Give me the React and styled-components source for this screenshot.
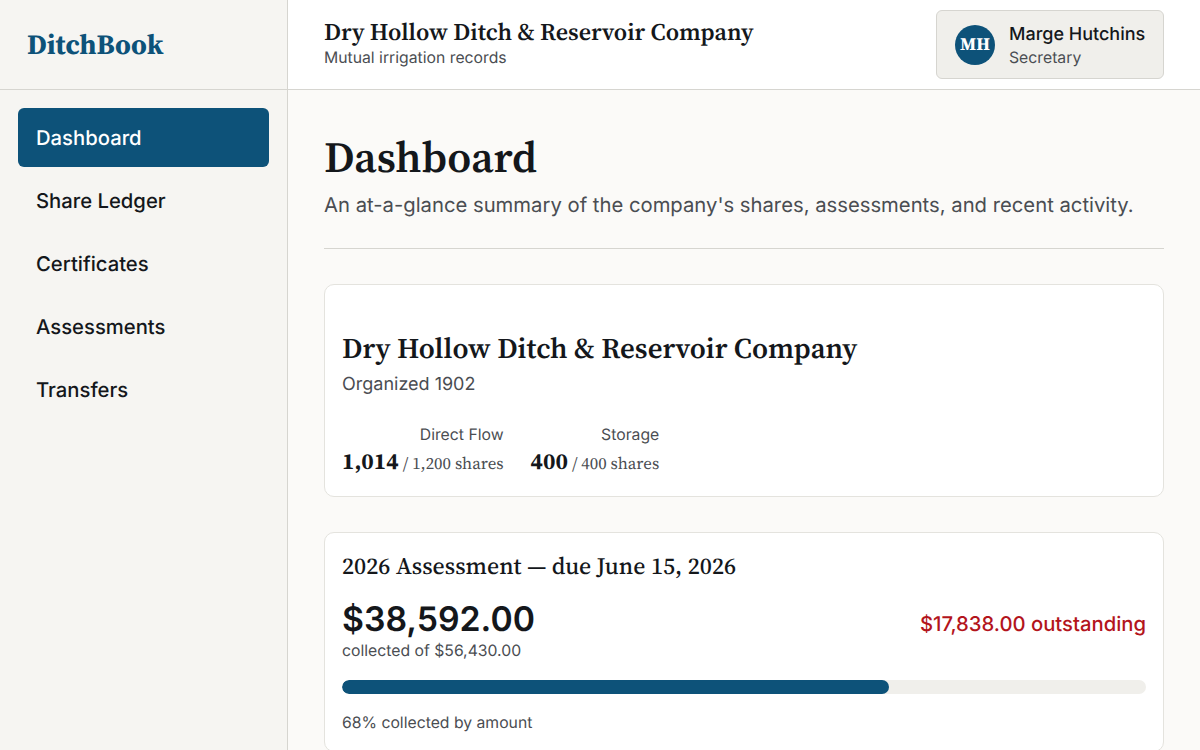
import React from 'react';
import styled, { createGlobalStyle } from 'styled-components';

const Global = createGlobalStyle`
  html, body { margin: 0; padding: 0; height: 100%; overflow: hidden; }
  * { box-sizing: border-box; font-optical-sizing: none; text-rendering: geometricPrecision; }
  body { font-family: Inter, sans-serif; background: #fbfaf8; color: #14171b; }
`;
const SERIF = `"Source Serif 4", "Liberation Serif", serif`;
const Shell = styled.div`display: grid; grid-template-columns: 288px 1fr; grid-template-rows: 90px 1fr; height: 750px; overflow: hidden;`;
const Brand = styled.div`background: #f6f5f2; border-right: 1px solid #d6d5d0; border-bottom: 1px solid #d6d5d0; display: flex; align-items: center; padding-left: 27px; font-family: ${SERIF}; font-weight: 700; font-size: 28px; color: #0d5279;`;
const Top = styled.header`background: #fff; border-bottom: 1px solid #d6d5d0; display: flex; align-items: center; justify-content: space-between; padding: 0 36px;`;
const TopText = styled.div`padding-bottom: 4px;`;
const Org = styled.div`font-family: ${SERIF}; font-weight: 600; font-size: 24px; line-height: 30px;`;
const Sub = styled.div`font-size: 15.75px; line-height: 20px; color: #4a4d52;`;
const User = styled.div`width: 228px; height: 69px; background: #f0efeb; border: 1px solid #d6d5d0; border-radius: 6px; display: flex; align-items: center; gap: 14px; padding-left: 18px;`;
const Avatar = styled.div`width: 40px; height: 40px; border-radius: 50%; background: #0d5279; color: #fff; font-family: ${SERIF}; font-weight: 700; font-size: 18px; display: flex; align-items: center; justify-content: center;`;
const UserText = styled.div`padding-top: 3px;`;
const UName = styled.div`font-size: 18px; line-height: 22px; font-weight: 500;`;
const URole = styled.div`font-size: 15.75px; line-height: 20px; color: #4a4d52; margin-top: 2px;`;
const Side = styled.nav`background: #f6f5f2; border-right: 1px solid #d6d5d0; padding: 18px; display: flex; flex-direction: column; gap: 4px;`;
const NavItem = styled.div`height: 59px; border-radius: 6px; padding-left: 18px; display: flex; align-items: center; font-size: 20.25px; font-weight: 500; color: ${p => p.$active ? '#fff' : '#14171b'}; background: ${p => p.$active ? '#0d5279' : 'transparent'};`;
const Main = styled.main`padding: 36px; overflow: hidden;`;
const H1 = styled.h1`margin: 0; font-family: ${SERIF}; font-weight: 600; font-size: 43.2px; line-height: 64px;`;
const Lead = styled.p`margin: 2px 0 0; font-size: 20.25px; color: #4a4d52;`;
const Rule = styled.hr`border: 0; border-top: 1px solid #d6d5d0; margin: 31px 0 35px;`;
const Card = styled.section`background: #fff; border: 1px solid #e4e3de; border-radius: 10px; padding: ${p => p.$top}px 17px 19px; margin-bottom: 35px;`;
const CardTitle = styled.h2`margin: 25px 0 0; font-family: ${SERIF}; font-weight: 600; font-size: 28.8px;`;
const Muted = styled.div`font-size: 18px; color: #4a4d52; margin-top: 6px;`;
const Stats = styled.div`display: flex; gap: 27px; margin-top: 30px;`;
const Stat = styled.div`text-align: right;`;
const StatLabel = styled.div`font-size: 15.75px; color: #4a4d52;`;
const StatValue = styled.div`font-family: ${SERIF}; margin-top: 1px; font-size: 16.875px; color: #4a4d52; b { font-size: 23px; color: #14171b; }`;
const AssessTitle = styled.h3`margin: 0; font-family: ${SERIF}; font-weight: 500; font-size: 23.75px;`;
const Row = styled.div`display: flex; justify-content: space-between; align-items: baseline; margin-top: 17px;`;
const Amount = styled.div`font-size: 33.75px; font-weight: 600;`;
const Out = styled.div`font-size: 20.25px; font-weight: 500; color: #b3141c;`;
const Sm = styled.div`font-size: 15.75px; color: #4a4d52; margin-top: ${p => p.$tight ? '1px' : '0'};`;
const Track = styled.div`height: 14px; border-radius: 7px; background: #f0efeb; margin: 20px 0 19px; overflow: hidden;`;
const Fill = styled.div`height: 100%; background: #0d5279; border-radius: 7px;`;

export default function App() {
  return (<>
    <Global />
    <Shell>
      <Brand>DitchBook</Brand>
      <Top>
        <TopText><Org>Dry Hollow Ditch &amp; Reservoir Company</Org><Sub>Mutual irrigation records</Sub></TopText>
        <User><Avatar>MH</Avatar><UserText><UName>Marge Hutchins</UName><URole>Secretary</URole></UserText></User>
      </Top>
      <Side>
        <NavItem $active>Dashboard</NavItem>
        <NavItem>Share Ledger</NavItem>
        <NavItem>Certificates</NavItem>
        <NavItem>Assessments</NavItem>
        <NavItem>Transfers</NavItem>
      </Side>
      <Main>
        <H1>Dashboard</H1>
        <Lead>An at-a-glance summary of the company's shares, assessments, and recent activity.</Lead>
        <Rule />
        <Card $top={18}>
          <CardTitle>Dry Hollow Ditch &amp; Reservoir Company</CardTitle>
          <Muted>Organized 1902</Muted>
          <Stats>
            <Stat><StatLabel>Direct Flow</StatLabel><StatValue><b>1,014</b> / 1,200 shares</StatValue></Stat>
            <Stat><StatLabel>Storage</StatLabel><StatValue><b>400</b> / 400 shares</StatValue></Stat>
          </Stats>
        </Card>
        <Card $top={16}>
          <AssessTitle>2026 Assessment — due June 15, 2026</AssessTitle>
          <Row><Amount>$38,592.00</Amount><Out>$17,838.00 outstanding</Out></Row>
          <Sm $tight>collected of $56,430.00</Sm>
          <Track><Fill style={{ width: '68%' }} /></Track>
          <Sm>68% collected by amount</Sm>
        </Card>
      </Main>
    </Shell>
  </>);
}
